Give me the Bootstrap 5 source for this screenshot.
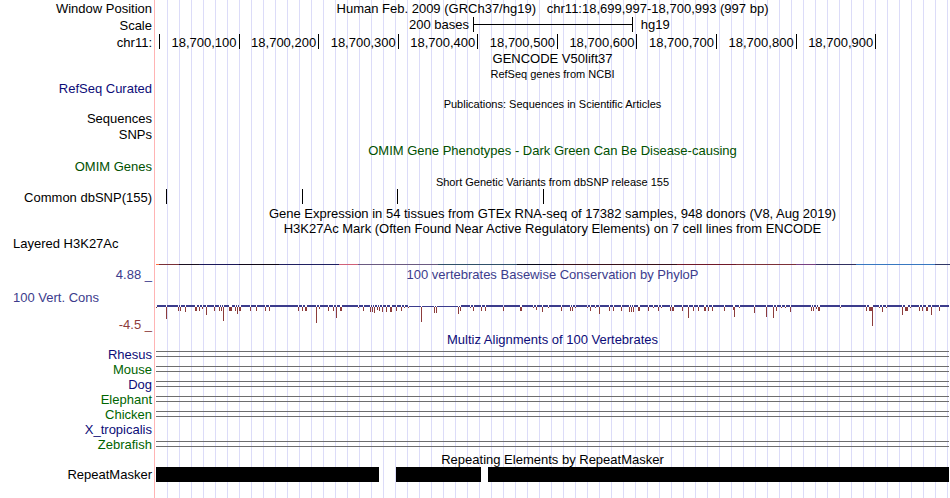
<!DOCTYPE html>
<html lang="en">
<head>
  <meta charset="UTF-8">
  <meta name="viewport" content="width=device-width, initial-scale=1">
  <title>Human chr11:18,699,997-18,700,993 - Genome Browser</title>
  <link href="https://cdn.jsdelivr.net/npm/bootstrap@5.3.0/dist/css/bootstrap.min.css" rel="stylesheet">
  <style>
    body {
      font-family: "Liberation Sans", Arial, sans-serif;
      font-size: 13px;
      line-height: 15px;
      color: #000;
    }
    .browser {
      background:
        linear-gradient(#ffb4b4, #ffb4b4) 154px 0 / 1px 100% no-repeat,
        repeating-linear-gradient(90deg, transparent 0 11px, #dcdcf8 11px 12px) 156px 0 no-repeat;
    }
    .track { height: 15px; white-space: nowrap; }
    .track-tall { height: 17px; line-height: 17px; }
    .track-mid { height: 16px; line-height: 16px; }
    .track-marks { height: 31px; }
    .track-wiggle { height: 50px; }
    .track-label { width: 155px; padding-right: 3px; text-align: right; }
    .label-left { padding-left: 13px; text-align: left; }
    .track-data { min-width: 0; }
    .track-data svg { display: block; width: 100%; height: 100%; shape-rendering: crispEdges; }
    .caption-sm { font-size: 11px; line-height: 16px; }
    .scale-lead { width: 40%; padding-right: 4px; }
    .scale-bar { width: 20.1%; height: 15px; border: solid #000; border-width: 0 1px; }
    .scale-bar hr { width: 100%; margin: 0; border-color: #000; opacity: 1; }
    .tick { width: 10.01%; height: 15px; padding-right: 2px; border-right: 1px solid #000; }
    .tick-first { width: 5px; }
    .clr-navy { color: #0c0c78; }
    .clr-green { color: #005000; }
    .clr-leaf { color: #006400; }
    .clr-cons { color: #3c3c8c; }
    .clr-neg { color: #8c3c3c; }
  </style>
</head>
<body>

<main class="browser min-vh-100 overflow-hidden">
  <div class="track track-tall d-flex">
    <div class="track-label flex-shrink-0">Window Position</div>
    <div class="track-data flex-grow-1 text-center">Human Feb. 2009 (GRCh37/hg19) &nbsp; chr11:18,699,997-18,700,993 (997 bp)</div>
  </div>
  <div class="track track-tall d-flex">
    <div class="track-label flex-shrink-0">Scale</div>
    <div class="track-data flex-grow-1 d-flex">
      <div class="scale-lead text-end lh-sm">200 bases</div>
      <div class="scale-bar d-flex align-items-center"><hr></div>
      <div class="ps-2 lh-sm">hg19</div>
    </div>
  </div>
  <div class="track track-tall d-flex">
    <div class="track-label flex-shrink-0">chr11:</div>
    <div class="track-data flex-grow-1 d-flex text-end">
      <div class="tick tick-first"></div>
      <div class="tick">18,700,100</div>
      <div class="tick">18,700,200</div>
      <div class="tick">18,700,300</div>
      <div class="tick">18,700,400</div>
      <div class="tick">18,700,500</div>
      <div class="tick">18,700,600</div>
      <div class="tick">18,700,700</div>
      <div class="tick">18,700,800</div>
      <div class="tick">18,700,900</div>
    </div>
  </div>

  <!-- genes and publications -->
  <div class="track d-flex">
    <div class="track-label flex-shrink-0"></div>
    <div class="track-data flex-grow-1 text-center">GENCODE V50lift37</div>
  </div>
  <div class="track d-flex">
    <div class="track-label flex-shrink-0"></div>
    <div class="track-data flex-grow-1 text-center caption-sm">RefSeq genes from NCBI</div>
  </div>
  <div class="track d-flex">
    <div class="track-label flex-shrink-0 clr-navy">RefSeq Curated</div>
  </div>
  <div class="track d-flex">
    <div class="track-label flex-shrink-0"></div>
    <div class="track-data flex-grow-1 text-center caption-sm">Publications: Sequences in Scientific Articles</div>
  </div>
  <div class="track track-mid d-flex">
    <div class="track-label flex-shrink-0">Sequences</div>
  </div>
  <div class="track track-mid d-flex">
    <div class="track-label flex-shrink-0">SNPs</div>
  </div>
  <div class="track track-mid d-flex clr-green">
    <div class="track-label flex-shrink-0"></div>
    <div class="track-data flex-grow-1 text-center">OMIM Gene Phenotypes - Dark Green Can Be Disease-causing</div>
  </div>
  <div class="track d-flex">
    <div class="track-label flex-shrink-0 clr-green">OMIM Genes</div>
  </div>

  <!-- variants -->
  <div class="track d-flex">
    <div class="track-label flex-shrink-0"></div>
    <div class="track-data flex-grow-1 text-center caption-sm">Short Genetic Variants from dbSNP release 155</div>
  </div>
  <div class="track track-tall d-flex">
    <div class="track-label flex-shrink-0">Common dbSNP(155)</div>
    <div class="track-data flex-grow-1">
      <svg viewBox="155 0 795 17" preserveAspectRatio="none" aria-hidden="true">
        <path d="M166 0h1v15h-1zM302 0h1v15h-1zM397 0h1v15h-1zM543 0h1v15h-1z"/>
      </svg>
    </div>
  </div>

  <!-- expression and regulation -->
  <div class="track d-flex">
    <div class="track-label flex-shrink-0"></div>
    <div class="track-data flex-grow-1 text-center">Gene Expression in 54 tissues from GTEx RNA-seq of 17382 samples, 948 donors (V8, Aug 2019)</div>
  </div>
  <div class="track d-flex">
    <div class="track-label flex-shrink-0"></div>
    <div class="track-data flex-grow-1 text-center">H3K27Ac Mark (Often Found Near Active Regulatory Elements) on 7 cell lines from ENCODE</div>
  </div>
  <div class="track track-marks d-flex">
    <div class="track-label label-left flex-shrink-0">Layered H3K27Ac</div>
    <div class="track-data flex-grow-1">
      <svg viewBox="155 0 795 31" preserveAspectRatio="none" aria-hidden="true">
        <path fill="#ff7040" d="M156 28h3v1h-3z"/>
        <path fill="#7a3038" d="M159 28h20v1h-20z"/>
        <path fill="#1a1020" d="M179 28h20v1h-20z"/>
        <path fill="#1c1858" d="M199 28h40v1h-40z"/>
        <path fill="#100818" d="M239 28h40v1h-40z"/>
        <path fill="#202060" d="M279 28h60v1h-60z"/>
        <path fill="#d06078" d="M339 28h19v1h-19z"/>
        <path fill="#6a5a80" d="M358 28h80v1h-80z"/>
        <path fill="#305068" d="M438 28h79v1h-79z"/>
        <path fill="#080818" d="M517 28h40v1h-40z"/>
        <path fill="#381018" d="M557 28h120v1h-120z"/>
        <path fill="#701828" d="M677 28h59v1h-59z"/>
        <path fill="#7c3038" d="M736 28h60v1h-60z"/>
        <path fill="#784080" d="M796 28h20v1h-20z"/>
        <path fill="#303060" d="M816 28h40v1h-40z"/>
        <path fill="#3878c0" d="M856 28h79v1h-79z"/>
        <path fill="#303868" d="M935 28h15v1h-15z"/>
      </svg>
    </div>
  </div>

  <!-- conservation -->
  <div class="track d-flex clr-cons">
    <div class="track-label flex-shrink-0">4.88 _</div>
    <div class="track-data flex-grow-1 text-center">100 vertebrates Basewise Conservation by PhyloP</div>
  </div>
  <div class="track track-wiggle d-flex">
    <div class="track-label flex-shrink-0 d-flex flex-column justify-content-between pt-2">
      <div class="label-left clr-cons">100 Vert. Cons</div>
      <div class="clr-neg">-4.5 _</div>
    </div>
    <div class="track-data flex-grow-1">
      <svg viewBox="155 0 795 50" preserveAspectRatio="none" aria-hidden="true">
        <path id="consBase" fill="#3c3c8c"/>
        <path id="consDrop" fill="#8c3c3c"/>
      </svg>
    </div>
  </div>
  <div class="track d-flex clr-navy">
    <div class="track-label flex-shrink-0"></div>
    <div class="track-data flex-grow-1 text-center">Multiz Alignments of 100 Vertebrates</div>
  </div>
  <div class="track d-flex">
    <div class="track-label flex-shrink-0 clr-navy">Rhesus</div>
    <div class="track-data flex-grow-1">
      <svg viewBox="155 0 795 15" preserveAspectRatio="none" aria-hidden="true"><path fill="#6e6e6e" d="M156 4h793v1H156zM156 9h793v1H156z"/></svg>
    </div>
  </div>
  <div class="track d-flex">
    <div class="track-label flex-shrink-0 clr-leaf">Mouse</div>
    <div class="track-data flex-grow-1">
      <svg viewBox="155 0 795 15" preserveAspectRatio="none" aria-hidden="true"><path fill="#6e6e6e" d="M156 4h793v1H156zM156 9h793v1H156z"/></svg>
    </div>
  </div>
  <div class="track d-flex">
    <div class="track-label flex-shrink-0 clr-navy">Dog</div>
    <div class="track-data flex-grow-1">
      <svg viewBox="155 0 795 15" preserveAspectRatio="none" aria-hidden="true"><path fill="#6e6e6e" d="M156 4h793v1H156zM156 9h793v1H156z"/></svg>
    </div>
  </div>
  <div class="track d-flex">
    <div class="track-label flex-shrink-0 clr-leaf">Elephant</div>
    <div class="track-data flex-grow-1">
      <svg viewBox="155 0 795 15" preserveAspectRatio="none" aria-hidden="true"><path fill="#6e6e6e" d="M156 4h793v1H156zM156 9h793v1H156z"/></svg>
    </div>
  </div>
  <div class="track d-flex">
    <div class="track-label flex-shrink-0 clr-leaf">Chicken</div>
    <div class="track-data flex-grow-1">
      <svg viewBox="155 0 795 15" preserveAspectRatio="none" aria-hidden="true"><path fill="#6e6e6e" d="M156 4h793v1H156zM156 9h793v1H156z"/></svg>
    </div>
  </div>
  <div class="track d-flex">
    <div class="track-label flex-shrink-0 clr-navy">X_tropicalis</div>
  </div>
  <div class="track d-flex">
    <div class="track-label flex-shrink-0 clr-leaf">Zebrafish</div>
    <div class="track-data flex-grow-1">
      <svg viewBox="155 0 795 15" preserveAspectRatio="none" aria-hidden="true"><path fill="#6e6e6e" d="M156 4h793v1H156zM156 9h793v1H156z"/></svg>
    </div>
  </div>

  <!-- repeats -->
  <div class="track d-flex">
    <div class="track-label flex-shrink-0"></div>
    <div class="track-data flex-grow-1 text-center">Repeating Elements by RepeatMasker</div>
  </div>
  <div class="track d-flex">
    <div class="track-label flex-shrink-0">RepeatMasker</div>
    <div class="track-data flex-grow-1">
      <svg viewBox="155 0 795 15" preserveAspectRatio="none" aria-hidden="true">
        <path d="M156 0h223v15H156zM396 0h85v15h-85zM488 0h461v15H488z"/>
      </svg>
    </div>
  </div>
</main>

<script src="https://cdn.jsdelivr.net/npm/bootstrap@5.3.0/dist/js/bootstrap.bundle.min.js"></script>
<script>
  // negative scores: [x, depth, width]
  const drops = [
    [156,1],[166,12],[178,4],[180,4],[185,5],[195,4,2],[199,4],[202,2],[206,8],[214,4],[219,4],[221,4],[223,14],
    [229,4,3],[235,4],[237,7],[239,4,2],[250,4],[256,4],[265,4],[269,4],[298,4],[302,4],[305,4,2],[316,16],[319,2],
    [328,4],[333,4],[336,11],[340,4,2],[358,1],[363,4],[370,5],[372,5],[374,6],[377,3],[379,4],[382,5],[386,5],
    [390,5,2],[396,4],[401,4],[404,1],[408,1],[421,15],[434,6],[436,6],[458,7],[460,4],[470,1],[473,4],[481,4],
    [485,4],[503,4],[520,4,2],[533,1],[536,3],[542,5],[548,1],[561,4],[570,4],[572,4],[575,1],[587,1],[590,4],
    [595,1],[599,7],[609,4],[613,4],[621,4],[629,5],[631,5],[633,5],[638,4,2],[648,4],[653,1],[658,4],[661,1],
    [670,4],[672,4,2],[682,4],[688,11],[693,4],[698,4],[704,4,2],[708,4],[712,4],[724,4],[733,3,2],[734,10],[739,1],
    [754,6],[766,10],[773,11],[776,4],[781,1],[785,1],[790,5],[811,4],[813,4],[816,2],[818,4,2],[840,1],[866,4],
    [869,4,3],[872,19],[879,1],[882,5],[886,1],[902,8],[905,4,3],[910,1],[919,4],[922,4],[926,4,2],[931,8],[939,4]
  ];
  const zero = 25;
  let base = '', red = '', from = 157;
  function band(a, b) {
    if (b <= a) return;
    // scores between 409 and 460 are close to zero, so the band is thinner
    const h = a >= 409 && a < 460 ? 1 : 2;
    base += `M${a} ${zero - h}H${b}v${h}H${a}z`;
  }
  drops.forEach(([x, depth, w = 1]) => {
    band(from, x);
    red += `M${x} ${zero}h${w}v${depth}h${-w}z`;
    from = x + w;
  });
  band(from, 949);
  document.getElementById('consBase').setAttribute('d', base);
  document.getElementById('consDrop').setAttribute('d', red);
</script>
</body>
</html>
